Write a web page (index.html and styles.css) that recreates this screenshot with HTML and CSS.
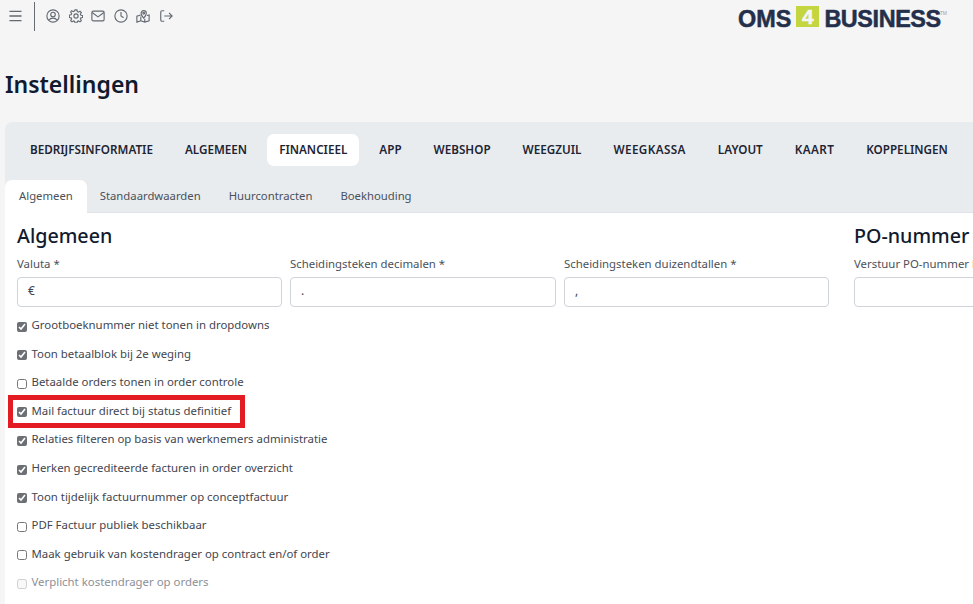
FILE: index.html
```html
<!DOCTYPE html>
<html lang="nl">
<head>
<meta charset="utf-8">
<title>Instellingen</title>
<link rel="stylesheet" href="styles.css">
</head>
<body>
<header class="topbar">
  <div class="icons">
    <svg class="ico menu" viewBox="0 0 14 14"><path d="M0.500 2h13M0.500 7h13M0.500 12h13"/></svg>
    <span class="divider"></span>
    <svg class="ico" viewBox="0 0 16 16"><circle cx="8" cy="8" r="7"/><circle cx="8" cy="6.300" r="2.600"/><path d="M3.400 12.800c1-1.700 2.600-2.400 4.600-2.400s3.600.7 4.600 2.400"/></svg>
    <svg class="ico" viewBox="0 0 16 16"><circle cx="8" cy="8" r="2.400"/><path d="M6.900 1h2.200l.4 2 1.300.6 1.800-1.100 1.500 1.500-1.100 1.800.6 1.300 2 .4v2.200l-2 .4-.6 1.300 1.100 1.800-1.500 1.500-1.800-1.100-1.300.6-.4 2H6.900l-.4-2-1.300-.6-1.800 1.100-1.500-1.500 1.100-1.800-.6-1.300-2-.4V6.900l2-.4.600-1.300-1.100-1.800L3 1.900l1.800 1.100 1.300-.6z"/></svg>
    <svg class="ico" viewBox="0 0 16 16"><rect x="1" y="2.500" width="14" height="11" rx="1.500"/><path d="M1.300 4l6.700 5 6.700-5"/></svg>
    <svg class="ico" viewBox="0 0 16 16"><circle cx="8" cy="8" r="7"/><path d="M8 3.500V8l3 2"/></svg>
    <svg class="ico" viewBox="0 0 16 16"><path d="M8.800 10.500C7 8.500 5.800 6.800 5.800 4.800a3 3 0 0 1 6 0c0 2-1.200 3.700-3 5.700z"/><circle cx="8.800" cy="4.800" r="1"/><path d="M5.300 6.800L1 8.300V15l4.500-1.500L10 15l5-1.500V6.800l-2.500.6M5.500 8.500v5M10 11v4"/></svg>
    <svg class="ico" viewBox="0 0 16 16"><path d="M6 2H3.500A1.500 1.500 0 0 0 2 3.500v9A1.500 1.500 0 0 0 3.500 14H6M6 8h9M11.500 4.500L15 8l-3.500 3.500"/></svg>
  </div>
  <div class="logo"><span>OMS</span><span class="four">4</span><span class="biz">BUSINESS</span><sup>TM</sup></div>
</header>

<h1 class="title">Instellingen</h1>

<main class="card">
  <nav class="nav">
    <a>BEDRIJFSINFORMATIE</a><a>ALGEMEEN</a><a class="active">FINANCIEEL</a><a>APP</a><a>WEBSHOP</a><a>WEEGZUIL</a><a class="loose">WEEGKASSA</a><a>LAYOUT</a><a class="loose">KAART</a><a>KOPPELINGEN</a>
  </nav>
  <div class="subnav">
    <a class="active">Algemeen</a><a>Standaardwaarden</a><a>Huurcontracten</a><a>Boekhouding</a>
  </div>
  <section class="pane">
    <div class="col-main">
      <h2>Algemeen</h2>
      <div class="fields">
        <div class="field"><label>Valuta *</label><div class="input">€</div></div>
        <div class="field"><label>Scheidingsteken decimalen *</label><div class="input">.</div></div>
        <div class="field"><label>Scheidingsteken duizendtallen *</label><div class="input">,</div></div>
      </div>
      <ul class="checks">
        <li><input type="checkbox" checked><span>Grootboeknummer niet tonen in dropdowns</span></li>
        <li><input type="checkbox" checked><span>Toon betaalblok bij 2e weging</span></li>
        <li><input type="checkbox"><span>Betaalde orders tonen in order controle</span></li>
        <li class="marked"><input type="checkbox" checked><span>Mail factuur direct bij status definitief</span><i class="redbox"></i></li>
        <li><input type="checkbox" checked><span>Relaties filteren op basis van werknemers administratie</span></li>
        <li><input type="checkbox" checked><span>Herken gecrediteerde facturen in order overzicht</span></li>
        <li><input type="checkbox" checked><span>Toon tijdelijk factuurnummer op conceptfactuur</span></li>
        <li><input type="checkbox"><span>PDF Factuur publiek beschikbaar</span></li>
        <li><input type="checkbox"><span>Maak gebruik van kostendrager op contract en/of order</span></li>
        <li class="off"><input type="checkbox" disabled><span>Verplicht kostendrager op orders</span></li>
      </ul>
    </div>
    <div class="col-side">
      <h2>PO-nummer</h2>
      <div class="field"><label>Verstuur PO-nummer bij</label><div class="input"></div></div>
    </div>
  </section>
</main>
</body>
</html>
```
FILE: styles.css
```css
* { box-sizing: border-box; }
html, body { margin: 0; height: 604px; overflow: hidden; }
body {
  background: #f5f5f5;
  font-family: "Noto Sans", sans-serif;
  color: #3f4650;
  width: 973px;
}
.topbar {
  height: 31px;
  display: flex;
  justify-content: space-between;
  padding-left: 8px;
}
.icons { display: flex; align-items: flex-start; }
.ico {
  width: 14px;
  height: 14px;
  margin: 9px 8.500px 0 0;
  fill: none;
  stroke: #636a72;
  stroke-width: 1.300;
}
.menu { margin: 9px 12px 0 1px; width: 13px; stroke-width: 1.500; }
.divider { width: 1px; height: 29px; margin: 2px 11px 0 0; background: #666c73; }
.logo {
  display: flex;
  align-items: flex-start;
  margin: 7px 26px 0 0;
  font: 700 23.400px/24px "Liberation Sans", sans-serif;
  color: #232f4b;
  -webkit-text-stroke: 0.500px #232f4b;
}
.biz { letter-spacing: -0.400px; }
.four {
  width: 23px;
  height: 21px;
  margin: -1px 5px 0;
  background: #c3d63f;
  color: #f5f5f5;
  -webkit-text-stroke: 0.500px #f5f5f5;
  font-size: 21px;
  line-height: 22px;
  text-align: center;
}
.logo sup { font-size: 5px; line-height: 8px; color: #9aa0a8; -webkit-text-stroke: 0; font-weight: 400; margin: 2px 0 0 -1px; }
.title {
  margin: 0 0 0 5px;
  height: 91px;
  padding-top: 37px;
  font-size: 23px;
  line-height: 32px;
  font-weight: 600;
  color: #111a2e;
}
.card {
  margin-left: 5px;
  width: 1100px;
  border-radius: 7px 0 0 0;
  background: #e9ecef;
}
.nav {
  display: flex;
  height: 58px;
  padding: 12px 0 0 13px;
}
.nav a {
  height: 32px;
  padding: 0 12px;
  margin-right: 8px;
  border-radius: 7px;
  font-size: 11.700px;
  line-height: 31px;
  font-weight: 600;
  color: #1d2433;
  white-space: nowrap;
}
.nav a.active { background: #fff; }
.nav a.loose { letter-spacing: 0.400px; }
.subnav { display: flex; height: 33px; border-bottom: 1px solid #dfe2e6; }
.subnav a {
  height: 33px;
  padding: 0 14px;
  font-size: 11.300px;
  line-height: 31px;
  color: #4a515b;
}
.subnav a.active { background: #fff; border-radius: 7px 7px 0 0; margin-right: -1px; }
.pane {
  background: #fff;
  display: flex;
  height: 400px;
  padding: 10px 0 0 12px;
}
.col-main { width: 837px; }
.col-side { width: 240px; }
h2 {
  margin: 0;
  height: 29px;
  font-size: 19.700px;
  line-height: 26px;
  font-weight: 500;
  color: #111a2e;
}
.fields { display: grid; grid-template-columns: 265px 266px 265px; column-gap: 8px; }
label {
  display: block;
  height: 25px;
  font-size: 11.400px;
  line-height: 23px;
  color: #4a515b;
  white-space: nowrap;
}
.input {
  height: 30px;
  padding-left: 10px;
  background: #fff;
  border: 1px solid #ced4da;
  border-radius: 4px;
  font-size: 12px;
  line-height: 26px;
  color: #3f4650;
}
.col-side .input { width: 260px; }
.checks { list-style: none; margin: 3.300px 0 0; padding: 0; }
.checks li {
  position: relative;
  display: flex;
  align-items: center;
  height: 28.600px;
  font-size: 11.400px;
  color: #3f4650;
}
.checks input {
  width: 10px;
  height: 10px;
  margin: 4px 4.500px 0 0;
  accent-color: #6c6f73;
}
.checks li.off { color: #8b9097; }
.redbox {
  position: absolute;
  left: -9px;
  top: -1px;
  width: 237px;
  height: 33px;
  border: 5px solid #e31b23;
}
```
